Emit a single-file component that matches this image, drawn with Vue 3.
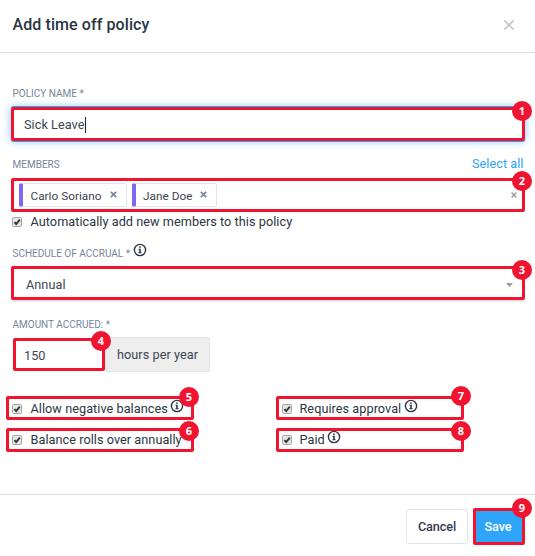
<script setup>
import { h } from 'vue'

const members = ['Carlo Soriano', 'Jane Doe']
const options = [
  { n: 5, text: 'Allow negative balances', info: true, cls: 'allow' },
  { n: 7, text: 'Requires approval', info: true, cls: 'approval' },
  { n: 6, text: 'Balance rolls over annually', info: false, cls: 'rolls' },
  { n: 8, text: 'Paid', info: true, cls: 'paid' },
]

const InfoIcon = () =>
  h('svg', { width: 14, height: 14, viewBox: '0 0 14 14', fill: 'none' }, [
    h('circle', { cx: 7, cy: 7, r: 5.6, stroke: '#2b3543', 'stroke-width': 1.4 }),
    h('path', { d: 'M6 3.4h1.8v1.4H6zM5.5 5.8h2.3v3.4h.8v1H5.4v-1h.8V6.8h-.7z', fill: '#2b3543' }),
  ])

const CheckIcon = () =>
  h('svg', { width: 10, height: 10, viewBox: '0 0 10 10', fill: 'none' }, [
    h('rect', { x: 0.5, y: 0.5, width: 9, height: 9, rx: 1, fill: '#e6e6e6', stroke: '#a5a5a5' }),
    h('path', { d: 'M2.4 5.2L4.2 7L7.8 2.6', stroke: '#333', 'stroke-width': 1.9 }),
  ])
</script>

<template>
  <div class="modal">
    <header class="head">
      <h1 class="title">Add time off policy</h1>
      <svg class="close" width="12" height="12" viewBox="0 0 12 12"><path d="M1.3 1.3L10.7 10.7M10.7 1.3L1.3 10.7" stroke="#c9c9c9" stroke-width="1.7" /></svg>
    </header>

    <main class="body">
      <div class="label name-label"><span>POLICY NAME *</span></div>
      <div class="mark field name">
        <span class="value">Sick Leave</span><i class="cursor"></i>
        <b class="badge">1</b>
      </div>

      <div class="label members-label">
        <span>MEMBERS</span>
        <a class="select-all">Select all</a>
      </div>
      <div class="mark field members">
        <span v-for="m in members" :key="m" class="chip">
          <span>{{ m }}</span>
          <svg width="7" height="7" viewBox="0 0 7 7"><path d="M.8 .8L6.2 6.2M6.2 .8L.8 6.2" stroke="#7b8a9c" stroke-width="1.8" /></svg>
        </span>
        <svg class="clear" width="6" height="6" viewBox="0 0 6 6"><path d="M.6 .6L5.4 5.4M5.4 .6L.6 5.4" stroke="#999" stroke-width="1.4" /></svg>
        <b class="badge">2</b>
      </div>
      <div class="auto"><CheckIcon /><span>Automatically add new members to this policy</span></div>

      <div class="label schedule-label"><span>SCHEDULE OF ACCRUAL *</span><InfoIcon /></div>
      <div class="mark field schedule">
        <span class="value">Annual</span>
        <svg class="caret" width="7" height="4" viewBox="0 0 7 4"><path d="M0 0h7L3.5 4z" fill="#999" /></svg>
        <b class="badge">3</b>
      </div>

      <div class="label amount-label"><span>AMOUNT ACCRUED: *</span></div>
      <div class="amount-row">
        <div class="mark amount"><span class="value">150</span><b class="badge">4</b></div>
        <div class="addon"><span>hours per year</span></div>
      </div>

      <div class="options">
        <div v-for="o in options" :key="o.n" class="mark option" :class="o.cls">
          <CheckIcon /><span class="opt-text">{{ o.text }}</span><InfoIcon v-if="o.info" class="info" />
          <b class="badge">{{ o.n }}</b>
        </div>
      </div>
    </main>

    <footer class="foot">
      <button class="cancel"><span>Cancel</span></button>
      <button class="mark save"><span>Save</span><b class="badge">9</b></button>
    </footer>
  </div>
</template>

<style>
body { background: #fff; }
</style>

<style scoped>
* { box-sizing: border-box; }
.modal {
  width: 535px; height: 556px; overflow: hidden; background: #fff;
  display: flex; flex-direction: column;
  font-family: Roboto, "Liberation Sans", sans-serif;
  font-size: 12.7px; line-height: 16px; letter-spacing: .045px; color: #3b4553; white-space: nowrap;
}
svg { display: block; flex: none; }
.head {
  height: 53px; flex: none; border-bottom: 1px solid #e0e0e0; padding: 0 20px 3px 12.5px;
  display: flex; align-items: center; justify-content: space-between;
}
.title { margin: 0; font-size: 16px; line-height: 20px; font-weight: 500; letter-spacing: .09px; color: #2b3543; }
.body { height: 441px; flex: none; padding: 34px 10px 0 11px; }
.label { display: flex; padding-left: 1.5px; font-size: 10px; line-height: 14px; letter-spacing: 0; color: #76859a; }
.mark { position: relative; border: 3px solid #f01431; border-radius: 2px; display: flex; align-items: center; }
.badge {
  position: absolute; top: -9px; right: -10px; width: 20px; height: 20px; border-radius: 50%;
  background: #f01431; color: #fff; font: 700 11px/20px "Open Sans", sans-serif; letter-spacing: 0; text-align: center;
}
.field { height: 34px; width: 514px; }
.name-label { height: 20px; }
.name { padding: 1px 0 0 10px; box-shadow: 0 -1px #2ea5f5, 0 1px #2ea5f5, 0 0 8px rgba(46, 165, 245, .65); }
.cursor { width: 1px; height: 16px; margin-left: 1px; background: #222; }
.members-label { height: 37px; padding: 17px 1.5px 0 1.5px; justify-content: space-between; }
.select-all { font-size: 12.7px; letter-spacing: .04px; color: #2ea5f5; margin-top: -1px; }
.members { padding-left: 5px; gap: 5px; }
.members .badge { top: -10px; }
.chip {
  height: 24px; border: 1px solid #dfe5ec; border-left: 4px solid #8066f5; border-radius: 2px;
  padding: 1px 9px 0 7.5px; display: flex; align-items: center; gap: 8px; font-size: 11.8px; letter-spacing: .01px;
}
.chip svg { margin-top: -2px; }
.clear { margin-left: auto; margin-right: 5px; }
.auto { display: flex; align-items: center; gap: 8.5px; padding: 0 0 0 1px; height: 20px; color: #2b3543; }
.schedule-label { height: 34px; padding-top: 15px; gap: 3px; }
.schedule-label svg { margin-top: -4px; }
.schedule { padding: 3px 9px 0 12px; justify-content: space-between; box-shadow: 0 2px #e2e7ee; }
.amount-label { height: 37px; padding-top: 18px; }
.amount-row { display: flex; height: 35px; padding-left: 2px; align-items: stretch; }
.amount { width: 92px; height: 33px; margin-top: 1px; padding: 3px 0 0 8px; }
.amount .badge { top: -10px; right: -9px; }
.addon { width: 105px; background: #eee; border: 1px solid #e4e4e4; border-left: 0; border-radius: 0 3px 3px 0; padding: 9px 0 0 12px; }
.options { display: grid; grid-template-columns: 188px 188px; column-gap: 82px; row-gap: 8px; margin: 24px 0 0 -5px; }
.option { height: 24px; padding: 1px 0 0 3px; color: #2b3543; }
.rolls, .paid { padding: 0 0 1px 3px; }
.opt-text { margin-left: 8.5px; }
.approval .opt-text, .paid .opt-text { margin-left: 7.5px; }
.info { margin: -6px 0 0 2.5px; }
.option .badge { top: -12px; right: -8px; }
.rolls .badge, .paid .badge { top: -10px; }
.approval .badge, .paid .badge { right: -10px; }
.approval .badge { top: -13px; }
.foot { height: 62px; flex: none; border-top: 1px solid #e0e0e0; padding: 13px 10px 0 0; display: flex; justify-content: flex-end; gap: 5px; }
button { margin: 0; padding: 0; font: 500 12.7px/16px Roboto, sans-serif; letter-spacing: -.1px; justify-content: center; }
.cancel { width: 62px; height: 35px; margin-top: 1px; background: #fff; border: 1px solid #dfe5ec; border-radius: 3px; color: #333d4c; }
.save { width: 52px; height: 37px; padding-right: 2px; background: #2ea5f9; color: #fff; }
.save .badge { top: -13px; right: -10px; }
</style>
